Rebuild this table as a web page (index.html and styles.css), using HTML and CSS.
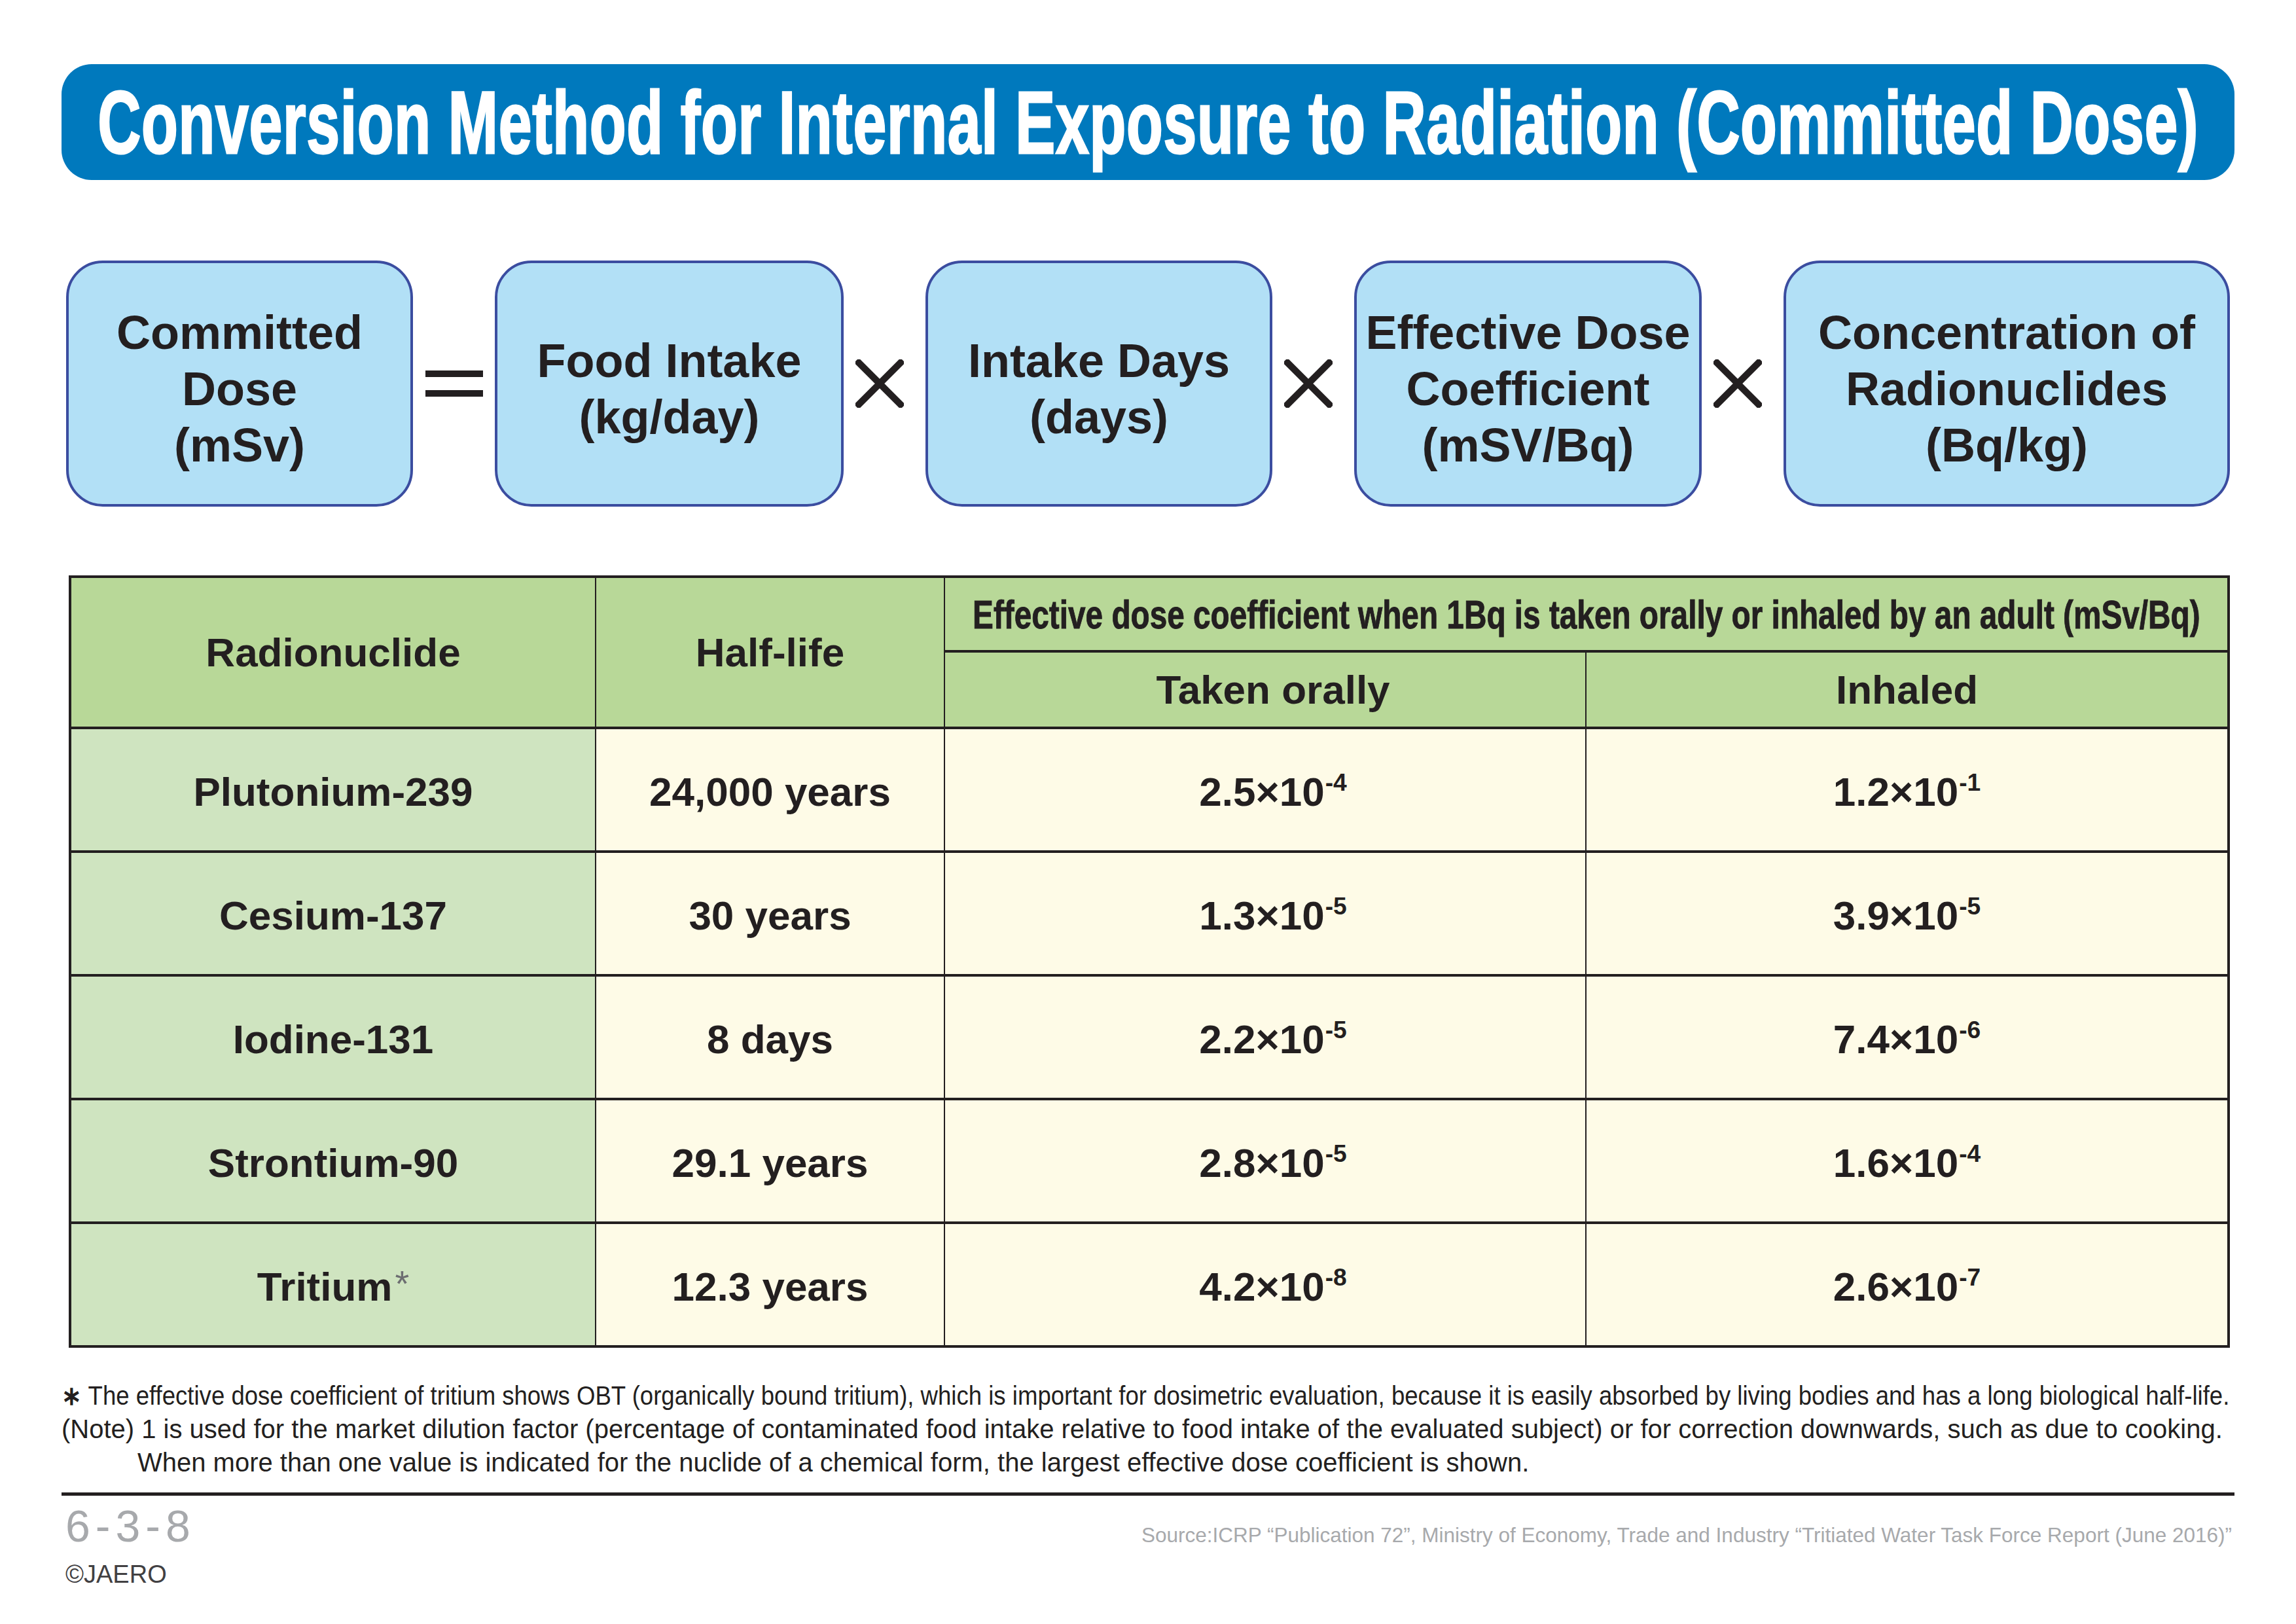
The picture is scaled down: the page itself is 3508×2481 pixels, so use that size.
FILE: index.html
```html
<!DOCTYPE html>
<html lang="en">
<head>
<meta charset="utf-8">
<title>Conversion Method for Internal Exposure to Radiation (Committed Dose)</title>
<link rel="stylesheet" href="styles.css">
</head>
<body>
<div class="page">
  <header class="title-bar">
    <h1 class="title"><span class="title-text">Conversion Method for Internal Exposure to Radiation (Committed Dose)</span></h1>
  </header>

  <section class="formula">
    <div class="box box-a">Committed<br>Dose<br>(mSv)</div>
    <div class="op">
      <svg class="op-eq" viewBox="0 0 88 40"><rect x="0" y="0" width="88" height="10" fill="#231f20"/><rect x="0" y="30" width="88" height="10" fill="#231f20"/></svg>
    </div>
    <div class="box box-b">Food Intake<br>(kg/day)</div>
    <div class="op">
      <svg class="op-x" viewBox="0 0 72 72"><path d="M5 5 L67 67 M67 5 L5 67" stroke="#231f20" stroke-width="10" stroke-linecap="square"/></svg>
    </div>
    <div class="box box-c">Intake Days<br>(days)</div>
    <div class="op">
      <svg class="op-x" viewBox="0 0 72 72"><path d="M5 5 L67 67 M67 5 L5 67" stroke="#231f20" stroke-width="10" stroke-linecap="square"/></svg>
    </div>
    <div class="box box-d">Effective Dose<br>Coefficient<br>(mSV/Bq)</div>
    <div class="op">
      <svg class="op-x" viewBox="0 0 72 72"><path d="M5 5 L67 67 M67 5 L5 67" stroke="#231f20" stroke-width="10" stroke-linecap="square"/></svg>
    </div>
    <div class="box box-e">Concentration of<br>Radionuclides<br>(Bq/kg)</div>
  </section>

  <table class="dose-table">
    <colgroup>
      <col class="c1"><col class="c2"><col class="c3"><col class="c4">
    </colgroup>
    <thead>
      <tr class="h1">
        <th rowspan="2">Radionuclide</th>
        <th rowspan="2">Half-life</th>
        <th colspan="2" class="th-wide"><div class="narrow-wrap"><span class="narrow">Effective dose coefficient when 1Bq is taken orally or inhaled by an adult (mSv/Bq)</span></div></th>
      </tr>
      <tr class="h2">
        <th class="oral">Taken orally</th>
        <th>Inhaled</th>
      </tr>
    </thead>
    <tbody>
      <tr><th class="nuc">Plutonium-239</th><td>24,000 years</td><td class="oral">2.5×10<sup>-4</sup></td><td>1.2×10<sup>-1</sup></td></tr>
      <tr><th class="nuc">Cesium-137</th><td>30 years</td><td class="oral">1.3×10<sup>-5</sup></td><td>3.9×10<sup>-5</sup></td></tr>
      <tr><th class="nuc">Iodine-131</th><td>8 days</td><td class="oral">2.2×10<sup>-5</sup></td><td>7.4×10<sup>-6</sup></td></tr>
      <tr><th class="nuc">Strontium-90</th><td>29.1 years</td><td class="oral">2.8×10<sup>-5</sup></td><td>1.6×10<sup>-4</sup></td></tr>
      <tr><th class="nuc">Tritium<span class="star">*</span></th><td>12.3 years</td><td class="oral">4.2×10<sup>-8</sup></td><td>2.6×10<sup>-7</sup></td></tr>
    </tbody>
  </table>

  <div class="notes">
    <p class="note note-tight"><span class="ast">∗</span> The effective dose coefficient of tritium shows OBT (organically bound tritium), which is important for dosimetric evaluation, because it is easily absorbed by living bodies and has a long biological half-life.</p>
    <p class="note">(Note) 1 is used for the market dilution factor (percentage of contaminated food intake relative to food intake of the evaluated subject) or for correction downwards, such as due to cooking.</p>
    <p class="note note-indent">When more than one value is indicated for the nuclide of a chemical form, the largest effective dose coefficient is shown.</p>
  </div>

  <hr class="rule">

  <footer class="foot">
    <div class="foot-left">
      <div class="code">6-3-8</div>
      <div class="copy">©JAERO</div>
    </div>
    <div class="source">Source:ICRP “Publication 72”, Ministry of Economy, Trade and Industry “Tritiated Water Task Force Report (June 2016)”</div>
  </footer>
</div>
</body>
</html>
```

FILE: styles.css
```css
html, body {
  margin: 0;
  padding: 0;
  background: #ffffff;
}

body {
  width: 3508px;
  height: 2481px;
  overflow: hidden;
  font-family: "Liberation Sans", Arial, sans-serif;
  color: #231f20;
}

.page {
  padding: 98px 94px 0 94px;
}

/* Title */
.title-bar {
  height: 177px;
  background: #0079bd;
  border-radius: 46px;
  display: flex;
  align-items: center;
  justify-content: center;
}

.title {
  margin: 0;
  font-family: "Liberation Sans", Arial, sans-serif;
  font-weight: 700;
  font-size: 136px;
  line-height: 1;
  color: #ffffff;
  white-space: nowrap;
  display: flex;
  justify-content: center;
  width: 100%;
}

.title-text {
  display: inline-block;
  flex: none;
  transform: scaleX(0.672);
  letter-spacing: 1px;
  -webkit-text-stroke: 3px #ffffff;
}

/* Formula */
.formula {
  display: flex;
  align-items: stretch;
  margin: 123px 7px 0 7px;
  height: 376px;
}

.box {
  box-sizing: border-box;
  background: #b2e0f6;
  border: 4px solid #3b4da0;
  border-radius: 56px;
  display: flex;
  align-items: center;
  justify-content: center;
  text-align: center;
  font-weight: 700;
  font-size: 72px;
  line-height: 86px;
  padding-top: 16px;
  color: #231f20;
}

.box-a { width: 530px; }
.box-b { width: 533px; }
.box-c { width: 530px; }
.box-d { width: 531px; }
.box-e { width: 682px; }

.op {
  width: 125px;
  display: flex;
  align-items: center;
  justify-content: center;
}

.op-eq {
  width: 88px;
  height: 40px;
}

.op-x {
  width: 74px;
  height: 74px;
  margin-right: 16px;
}

/* Table */
.dose-table {
  margin: 105px 0 0 11px;
  width: 3298px;
  border-collapse: collapse;
  table-layout: fixed;
  border: 4px solid #231f20;
}

.c1 { width: 803px; }
.c2 { width: 533px; }
.c3 { width: 980px; }
.c4 { width: 982px; }

.dose-table th,
.dose-table td {
  padding: 0;
  text-align: center;
  vertical-align: middle;
  font-weight: 700;
  font-size: 62px;
  color: #231f20;
  border-left: 2px solid #231f20;
  border-right: 2px solid #231f20;
  border-top: 4px solid #231f20;
  border-bottom: 4px solid #231f20;
}

.dose-table thead th {
  background: #b8d898;
}

.dose-table .h1 { height: 114px; }
.dose-table .h2 { height: 117px; }
.dose-table .h2 th { border-top-width: 3px; }

.dose-table .oral { padding-left: 24px; }

.narrow-wrap {
  display: flex;
  justify-content: center;
  white-space: nowrap;
}

.narrow {
  display: inline-block;
  flex: none;
  font-size: 62px;
  transform: scaleX(0.77);
  -webkit-text-stroke: 1px #231f20;
}

.dose-table tbody tr { height: 189px; }

.dose-table tbody th,
.dose-table tbody td {
  padding-top: 6px;
}

.dose-table tbody .nuc {
  background: #cfe4c0;
}

.dose-table tbody td {
  background: #fefbe7;
}

.dose-table sup {
  font-size: 0.6em;
  vertical-align: 0;
  position: relative;
  top: -0.62em;
  margin-left: 1px;
}

.star {
  font-weight: 400;
  color: #6d6e71;
  font-size: 0.9em;
  position: relative;
  top: -0.12em;
  margin-left: 4px;
}

/* Notes */
.notes {
  margin-top: 48px;
  font-size: 40px;
  line-height: 51px;
  color: #231f20;
}

.note {
  margin: 0;
  white-space: nowrap;
}

.note-tight {
  transform: scaleX(0.914);
  transform-origin: left center;
}

.ast { font-weight: 700; }

.note-indent {
  padding-left: 116px;
}

.rule {
  margin: 20px 0 0 0;
  border: 0;
  height: 5px;
  background: #231f20;
}

/* Footer */
.foot {
  display: flex;
  justify-content: space-between;
  align-items: flex-start;
}

.foot-left {
  display: flex;
  flex-direction: column;
  padding-left: 6px;
}

.code {
  margin-top: 8px;
  font-size: 68px;
  line-height: 76px;
  letter-spacing: 8px;
  color: #a7a9ac;
}

.copy {
  margin-top: 14px;
  font-size: 38px;
  line-height: 44px;
  color: #414042;
}

.source {
  margin-top: 40px;
  font-size: 31.5px;
  line-height: 40px;
  color: #a7a9ac;
  padding-right: 4px;
}
```
